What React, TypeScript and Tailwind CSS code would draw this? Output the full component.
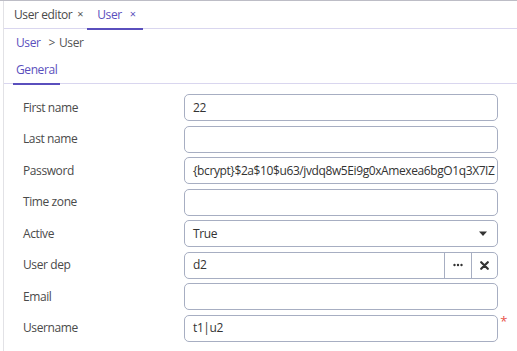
import React from "react";

const rows = [
  { label: "First name", value: "22" },
  { label: "Last name", value: "" },
  { label: "Password", value: "{bcrypt}$2a$10$u63/jvdq8w5Ei9g0xAmexea6bgO1q3X7IZ" },
  { label: "Time zone", value: "" },
];

function Field({ children, className = "" }: { children?: React.ReactNode; className?: string }) {
  return (
    <div className={"h-[27px] w-[314px] border border-[#a7aec2] rounded-[5px] bg-white flex items-center overflow-hidden " + className}>
      {children}
    </div>
  );
}

function Row({ label, children }: { label: string; children: React.ReactNode }) {
  return (
    <div className="flex items-center h-[31.5px]">
      <div className="w-[161px] text-[#4a4a4a]">{label}</div>
      {children}
    </div>
  );
}

export default function App() {
  return (
    <div
      className="w-[517px] h-[351px] bg-white border-t border-[#bdbdc6] overflow-hidden text-[12px] tracking-[-0.4px]"
      style={{ fontFamily: "'Open Sans', 'Noto Sans', sans-serif" }}
    >
      <div className="ml-[3px] h-full border-l border-[#e2e2e6]">
        {/* tabs */}
        <div className="flex h-[28px] border-b border-[#d9d6ef]">
          <div className="flex items-center pl-[10px] pr-[4px] text-[#4a4a4a]">
            <span>User editor</span>
            <span className="ml-[5px] text-[11px] text-[#555]">×</span>
          </div>
          <div className="flex items-center pl-[10px] pr-[7px] text-[#5a4fbd] border-b-2 border-[#5a4fbd] h-[29px]">
            <span>User</span>
            <span className="ml-[8px] text-[11px]">×</span>
          </div>
        </div>

        {/* breadcrumb */}
        <div className="flex items-center h-[28px] pl-[12px]">
          <span className="text-[#5a4fbd]">User</span>
          <span className="ml-[8px] text-[#555]">&gt;</span>
          <span className="ml-[4px] text-[#555]">User</span>
        </div>

        {/* section tabs */}
        <div className="flex h-[27px] border-b border-[#d9d6ef]">
          <div className="ml-[9px] px-[3px] flex items-center text-[#5a4fbd] border-b-2 border-[#5a4fbd] h-[28px]">
            General
          </div>
        </div>

        {/* form */}
        <div className="pl-[19px] pt-[8px]">
          {rows.map((r) => (
            <Row key={r.label} label={r.label}>
              <Field>
                <span className="pl-[8px] text-[#333] whitespace-nowrap">{r.value}</span>
              </Field>
            </Row>
          ))}
          <Row label="Active">
            <Field className="justify-between">
              <span className="pl-[8px] text-[#333]">True</span>
              <svg width="10" height="6" viewBox="0 0 10 6" className="mr-[9px]">
                <path d="M1 0.5h8L5 5z" fill="#333" />
              </svg>
            </Field>
          </Row>
          <Row label="User dep">
            <Field>
              <span className="pl-[8px] text-[#333] flex-1">d2</span>
              <div className="h-full w-[27px] border-l border-[#a7aec2] flex items-center justify-center">
                <svg width="10" height="4" viewBox="0 0 10 4">
                  <circle cx="1.5" cy="2" r="1.2" fill="#333" />
                  <circle cx="5" cy="2" r="1.2" fill="#333" />
                  <circle cx="8.5" cy="2" r="1.2" fill="#333" />
                </svg>
              </div>
              <div className="h-full w-[26px] border-l border-[#a7aec2] flex items-center justify-center">
                <svg width="9" height="9" viewBox="0 0 9 9">
                  <path d="M1.2 1.2l6.6 6.6M7.8 1.2L1.2 7.8" stroke="#333" strokeWidth="2.2" strokeLinecap="round" />
                </svg>
              </div>
            </Field>
          </Row>
          <Row label="Email">
            <Field />
          </Row>
          <Row label="Username">
            <div className="relative">
              <Field>
                <span className="pl-[8px] text-[#333]">t1|u2</span>
              </Field>
              <span className="absolute -right-[9px] -top-[3px] text-[13px] text-[#e8524a]">*</span>
            </div>
          </Row>
        </div>
      </div>
    </div>
  );
}
